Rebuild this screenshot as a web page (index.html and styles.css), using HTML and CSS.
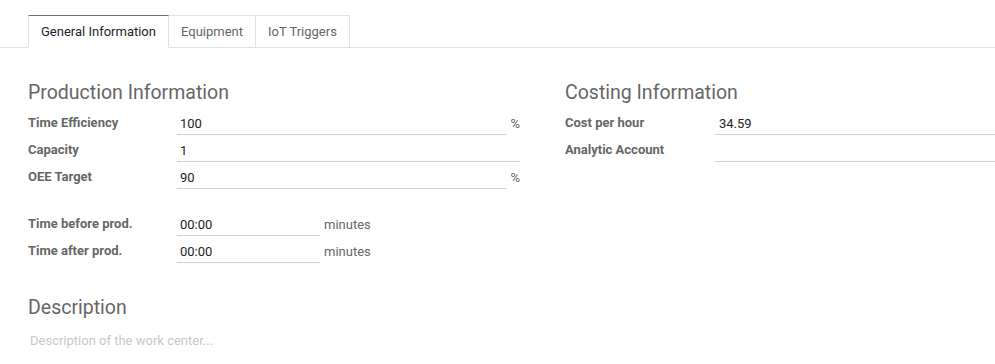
FILE: index.html
```html
<!DOCTYPE html>
<html lang="en">
<head>
    <meta charset="UTF-8">
    <title>Work Center</title>
    <link rel="stylesheet" href="styles.css">
</head>
<body>
    <div class="notebook">
        <ul class="tabs">
            <li class="tab active">General Information</li>
            <li class="tab">Equipment</li>
            <li class="tab">IoT Triggers</li>
        </ul>

        <div class="sheet">
            <div class="groups">
                <div class="group">
                    <h2 class="separator">Production Information</h2>
                    <div class="row">
                        <label>Time Efficiency</label>
                        <div class="field">
                            <span class="input">100</span>
                            <span class="unit">%</span>
                        </div>
                    </div>
                    <div class="row">
                        <label>Capacity</label>
                        <div class="field">
                            <span class="input">1</span>
                        </div>
                    </div>
                    <div class="row">
                        <label>OEE Target</label>
                        <div class="field">
                            <span class="input">90</span>
                            <span class="unit">%</span>
                        </div>
                    </div>

                    <div class="spacer"></div>

                    <div class="row">
                        <label>Time before prod.</label>
                        <div class="field">
                            <span class="input short">00:00</span>
                            <span class="unit">minutes</span>
                        </div>
                    </div>
                    <div class="row">
                        <label>Time after prod.</label>
                        <div class="field">
                            <span class="input short">00:00</span>
                            <span class="unit">minutes</span>
                        </div>
                    </div>
                </div>

                <div class="group right">
                    <h2 class="separator">Costing Information</h2>
                    <div class="row">
                        <label>Cost per hour</label>
                        <div class="field">
                            <span class="input">34.59</span>
                        </div>
                    </div>
                    <div class="row">
                        <label>Analytic Account</label>
                        <div class="field">
                            <span class="input"></span>
                        </div>
                    </div>
                </div>
            </div>

            <h2 class="separator desc">Description</h2>
            <div class="placeholder">Description of the work center...</div>
        </div>
    </div>
</body>
</html>
```

FILE: styles.css
```css
body {
    margin: 0;
    background-color: #ffffff;
    font-family: Roboto, "Liberation Sans", sans-serif;
    font-size: 13px;
    color: #212529;
}

.tabs {
    display: flex;
    margin: 0;
    padding: 15px 0 0 28px;
    list-style: none;
    border-bottom: 1px solid #dee2e6;
}

.tab {
    height: 31px;
    line-height: 31px;
    padding: 0 12px;
    margin-bottom: -1px;
    color: #666666;
    border: 1px solid #dee2e6;
    border-left: none;
    border-bottom: none;
}

.tab:first-child {
    border-left: 1px solid #dee2e6;
}

.tab.active {
    color: #212529;
    background-color: #ffffff;
    border-top-color: #7f6680;
    border-bottom: 1px solid #ffffff;
}

.sheet {
    padding: 0 0 0 28px;
}

.groups {
    display: grid;
    grid-template-columns: 492px 1fr;
    column-gap: 45px;
}

.separator {
    margin: 33px 0 3px 0;
    height: 24px;
    line-height: 24px;
    font-size: 19.5px;
    font-weight: 400;
    color: #666666;
}

.row {
    display: flex;
    height: 27px;
    align-items: flex-end;
}

.row label {
    width: 149px;
    flex: none;
    align-self: stretch;
    padding-top: 7px;
    box-sizing: border-box;
    font-weight: 700;
    color: #666666;
}

.right .row label {
    width: 150px;
}

.field {
    display: flex;
    flex: 1;
    align-items: flex-start;
    height: 22px;
}

.input {
    flex: 1;
    height: 21px;
    line-height: 22px;
    padding-left: 3px;
    border-bottom: 1px solid #d0d0d0;
}

.input.short {
    flex: none;
    width: 140px;
}

.unit {
    margin-left: 4px;
    line-height: 22px;
    color: #666666;
}

.right .input {
    padding-left: 4px;
}

.spacer {
    height: 20px;
}

.separator.desc {
    margin-top: 33px;
    margin-bottom: 0;
}

.placeholder {
    margin-top: 13px;
    padding-left: 2px;
    color: #c8c8c8;
}
```
